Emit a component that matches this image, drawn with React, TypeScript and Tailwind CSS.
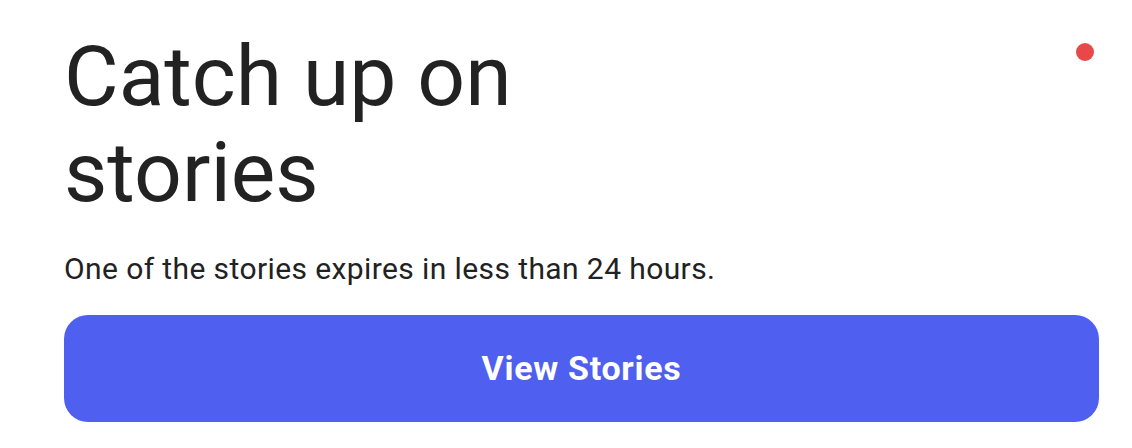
export default function App() {
  return (
    <div className="relative h-[448px] w-[1132px] bg-white font-['Roboto',sans-serif] text-[#222222]">
      {/* unread indicator */}
      <span className="absolute left-[1076px] top-[43px] size-[18px] rounded-full bg-[#e84848]" />

      <div className="flex flex-col pl-16 pr-[33px] pt-[29px]">
        <h1 className="text-[84px] font-normal leading-[96px]">
          Catch up on
          <br />
          stories
        </h1>
        <p className="mt-[30px] text-[30px] leading-[36px] tracking-[0.4px]">
          One of the stories expires in less than 24 hours.
        </p>
        <button className="mt-[28px] flex h-[107px] w-full items-center justify-center rounded-[24px] bg-[#4f5fef] text-[34px] font-bold tracking-[0.7px] text-white">
          View Stories
        </button>
      </div>
    </div>
  );
}
